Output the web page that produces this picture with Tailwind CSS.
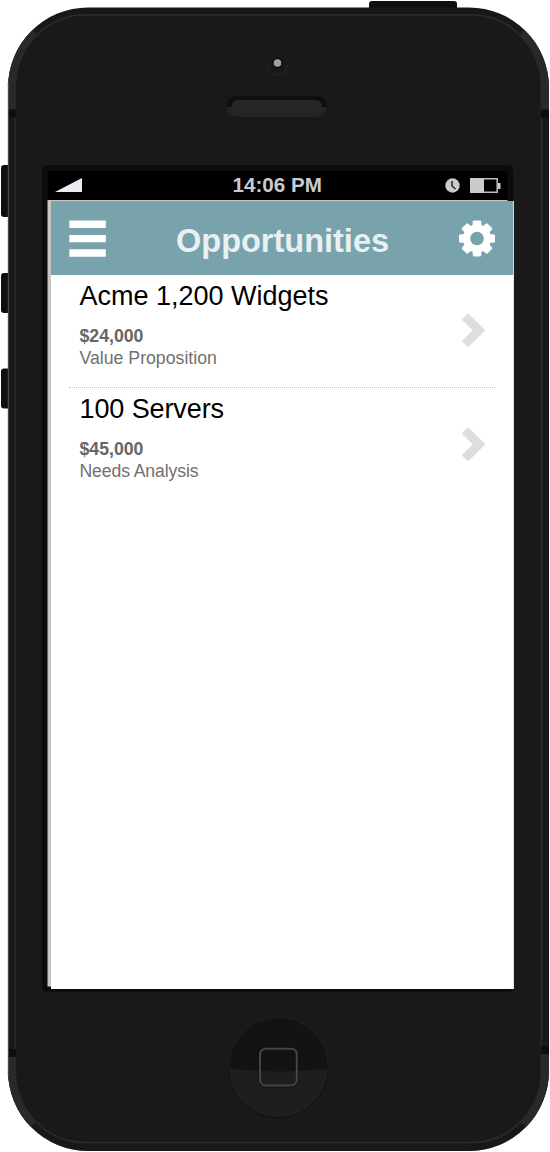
<!DOCTYPE html>
<html lang="en">
<head>
<meta charset="utf-8">
<meta name="viewport" content="width=device-width, initial-scale=1">
<title>Opportunities</title>
<script src="https://cdn.jsdelivr.net/npm/@tailwindcss/browser@4"></script>
</head>
<body class="bg-white">
<div class="relative w-[550px] h-[1152px] overflow-hidden font-['Liberation_Sans',Arial,sans-serif]">
  <!-- Phone body -->
  <svg class="absolute inset-0" width="550" height="1152" viewBox="0 0 550 1152" fill="none">
    <defs>
      <clipPath id="body"><path d="M88 7.500H469A80 80 0 0 1 549 87.500V1071A80 80 0 0 1 469 1151H88A80 80 0 0 1 8 1071V87.500A80 80 0 0 1 88 7.500Z"/></clipPath>
      <clipPath id="button"><circle cx="278.300" cy="1067.500" r="50"/></clipPath>
      <pattern id="mesh" width="4" height="4" patternUnits="userSpaceOnUse"><path fill="#292929" d="M0 0h4v4H0z"/><path d="M-1 5 5-1M-1 1 1-1M3 5 5 3" stroke="#202020"/></pattern>
    </defs>
    <g fill="#0e0f0f">
      <rect x="369" y="1" width="88" height="12" rx="3"/>
      <rect x="1" y="165" width="12" height="52" rx="3"/>
      <rect x="1" y="273" width="12" height="40" rx="3"/>
      <rect x="1" y="368.500" width="12" height="40" rx="3"/>
    </g>
    <g clip-path="url(#body)">
      <path fill="#181818" d="M0 0h550v1152H0z"/>
      <path fill="#292929" d="M0 0 34 31 80 80V110H0ZM550 0 523 31 480 80V110H550ZM0 1057H60L36 1122 0 1152ZM550 1054H490L521 1122 550 1152Z"/>
      <path fill="#191919" d="M86 14H471A70 73 0 0 1 541 87V1071A70 72 0 0 1 471 1143H86A70 72 0 0 1 16 1071V87A70 73 0 0 1 86 14Z"/>
      <path stroke="#292929" stroke-width="1.800" d="M86 14.800H471A70 73 0 0 1 541.500 87V1071A70 72 0 0 1 471 1142.500H86A70 72 0 0 1 15.200 1071V87A70 73 0 0 1 86 14.800Z"/>
      <path fill="#0d0d0d" d="M8 109.500h8v8H8zM541 109.500h9v8h-9zM8 1049h8v8H8zM541 1046h9v8h-9z"/>
    </g>
    <path d="M8.300 82V1076" stroke="#555"/>
    <!-- Camera and speaker -->
    <path d="M267.500 65a10 10 0 0 0 20 0" stroke="#272727"/>
    <circle cx="277.500" cy="63" r="5.500" fill="#101010"/>
    <circle cx="277.500" cy="63" r="3.800" fill="#a0a0a0"/>
    <path fill="#0e0e0e" d="M226.500 107a10.500 11 0 0 1 10.500-11h79.500a10.500 11 0 0 1 10.500 11z"/>
    <path fill="#242424" d="M226.500 107a10.500 10.500 0 0 0 10.500 10h79.500a10.500 10.500 0 0 0 10.500-10z"/>
    <rect x="231.500" y="100" width="90.500" height="12" rx="6" fill="url(#mesh)"/>
    <!-- Home button -->
    <g clip-path="url(#button)">
      <path fill="#131313" d="M220 1010h120v120H220z"/>
      <path fill="#1e1e1e" d="M220 1067Q278 1076 337 1067V1130H220z"/>
    </g>
    <path d="M228.300 1067a50 50 0 0 1 100 0" stroke="#202020"/>
    <path d="M228.300 1068a50 50 0 0 0 100 0" stroke="#121212"/>
    <rect x="258.500" y="1047" width="39.500" height="40" rx="7" stroke="#101010"/>
    <rect x="260" y="1048.700" width="36.800" height="36.800" rx="5.500" stroke="#454545" stroke-width="2"/>
    <!-- Display surround -->
    <rect x="42" y="165.300" width="471" height="826.500" rx="5" fill="#0b0c10"/>
    <path fill="#000" d="M48 171H507.500V201H48z"/>
    <path fill="#c9c5c5" d="M47.500 200H507.500V202H51V986.500H47.500z"/>
  </svg>

  <!-- Screen -->
  <div class="relative flex flex-col pt-[171px] pl-[51px] w-[514px] h-[989px]">
    <div class="flex h-[30px] shrink-0 items-center pl-1 pr-[13px]">
      <svg class="-mt-0.5" width="28" height="14" viewBox="0 0 28 14"><path d="M0 14 27 0V14Z" fill="#e9edf2"/></svg>
      <span class="ml-[149.500px] w-[120px] whitespace-nowrap text-[20.600px] leading-[30px] -mt-0.5 font-bold text-[#cbcbcb]">14:06 PM</span>
      <svg class="ml-auto mr-[10.500px] -mt-px" width="15" height="15" viewBox="0 0 15 15" fill="none"><circle cx="7.500" cy="7.500" r="7.200" fill="#cbcbcb"/><path d="M7 3V8L10.500 11" stroke="#222" stroke-width="1.500"/></svg>
      <svg class="-mt-px" width="31" height="15" viewBox="0 0 31 15" fill="none"><path d="M.8.800H27.200V14.200H.8Z" stroke="#bdbdbd" stroke-width="1.500"/><path d="M0 0H14V15H0ZM28 5H30.500V11H28Z" fill="#cbcbcb"/></svg>
    </div>
    <header class="flex h-[74px] shrink-0 items-center border-r border-[#d5dcde] bg-[#79a3ac] pl-[18px] pr-[18px]">
      <svg width="37" height="37" viewBox="0 0 37 37" fill="#fff"><path d="M.3.500H36.800V8H.3ZM.3 15H36.800V22.200H.3ZM.3 29.200H36.800V36.700H.3Z"/></svg>
      <h1 class="ml-[70px] mt-1.5 whitespace-nowrap text-[32.500px] leading-10 font-bold text-[#e8f0f1]">Opportunities</h1>
      <svg class="ml-auto" width="36" height="37" viewBox="-18 -18.500 36 37">
        <g fill="#fff">
          <path id="teeth" d="M-4.600-12-4.100-17.300-3.300-18H3.300L4.100-17.300 4.600-12V12L4.100 17.300 3.300 18H-3.300L-4.100 17.300-4.600 12Z"/>
          <use href="#teeth" transform="rotate(45)"/>
          <use href="#teeth" transform="rotate(90)"/>
          <use href="#teeth" transform="rotate(135)"/>
          <circle r="14"/>
        </g>
        <circle r="6.800" fill="#79a3ac"/>
      </svg>
    </header>
    <main class="grow border-r border-[#e3e3e3] bg-white pl-[18px] pr-[18px]">
      <div class="flex justify-between border-b border-dotted border-[#c4c4c4] pt-[6px] pr-[9px] pb-[18px] pl-[10.500px]">
        <div class="whitespace-nowrap">
          <h2 class="mb-[14px] text-[27px] leading-[30px] text-black">Acme 1,200 Widgets</h2>
          <p class="text-[17.700px] leading-[22px] font-bold text-[#666]">$24,000</p>
          <p class="text-[17.700px] leading-[22px] text-[#707070]">Value Proposition</p>
        </div>
        <svg class="mt-8" width="25" height="35" viewBox="0 0 25 35"><path fill="#ddd" stroke="#e6e6e6" stroke-width=".8" d="M.9 6.500 7.200.6 24.200 17.300 7.200 34.200.9 28.300 11.800 17.300Z"/></svg>
      </div>
      <div class="flex justify-between pt-[6px] pr-[9px] pl-[10.500px]">
        <div class="whitespace-nowrap">
          <h2 class="mb-[14px] text-[27px] leading-[30px] tracking-[-0.1px] text-black">100 Servers</h2>
          <p class="text-[17.700px] leading-[22px] font-bold text-[#666]">$45,000</p>
          <p class="text-[17.600px] leading-[22px] tracking-[-0.1px] text-[#707070]">Needs Analysis</p>
        </div>
        <svg class="mt-[33px]" width="25" height="35" viewBox="0 0 25 35"><path fill="#ddd" stroke="#e6e6e6" stroke-width=".8" d="M.9 6.500 7.200.6 24.200 17.300 7.200 34.200.9 28.300 11.800 17.300Z"/></svg>
      </div>
    </main>
  </div>
</div>
</body>
</html>
